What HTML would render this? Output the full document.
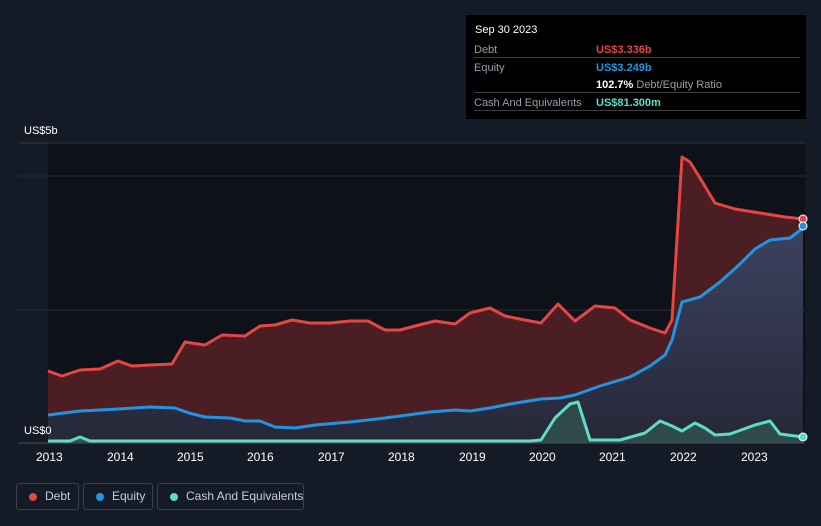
<!DOCTYPE html>
<html><head><style>
body{margin:0;width:821px;height:526px;background:#151b26;font-family:"Liberation Sans",sans-serif;overflow:hidden;position:relative}
.t{position:absolute;font-size:12px;color:#fff}
.tip{position:absolute;left:466px;top:15px;width:340px;height:104px;background:#000;font-size:11px}
.row{position:absolute;left:8px;right:6px;border-bottom:1px solid #3a3d44;height:17px}
.row span{position:absolute;top:4px}
.lg{position:absolute;top:483px;height:27px;border:1px solid #3a3f4a;border-radius:3px;color:#c8ccd3;font-size:12px;line-height:25px;box-sizing:border-box;white-space:nowrap}
.lg i{position:absolute;left:12px;top:9px;width:8px;height:8px;border-radius:50%}
</style></head><body>
<svg width="821" height="526" style="position:absolute;left:0;top:0">
<defs><linearGradient id="eq" x1="0" y1="0" x2="0" y2="1"><stop offset="0" stop-color="#3c4160"/><stop offset="1" stop-color="#262838"/></linearGradient></defs>
<rect x="48" y="143" width="757" height="300" fill="#0e1117"/>
<line x1="18" y1="143" x2="805" y2="143" stroke="#343841"/>
<line x1="18" y1="176" x2="805" y2="176" stroke="#262a31"/>
<line x1="18" y1="310" x2="805" y2="310" stroke="#2a2e38"/>
<path fill="#4a1e23" d="M48,371 L62,376 L80,370 L100,369 L118,361 L132,366 L150,365 L172,364 L185,342 L205,345 L222,335 L245,336 L260,326 L275,325 L292,320 L310,323 L330,323 L350,321 L368,321 L385,330 L400,330 L415,326 L435,321 L455,324 L470,313 L490,308 L505,316 L525,320 L541,323 L558,304 L575,321 L595,306 L615,308 L630,320 L650,328 L665,333 L672,320 L682,157 L690,162 L700,178 L715,203 L735,209 L760,213 L785,217 L803,219 L803,443 L48,443Z"/>
<path fill="url(#eq)" d="M48,415 L80,411 L119,409 L150,407 L175,408 L189,413 L205,417 L230,418 L245,421 L260,421 L275,427 L295,428 L315,425 L350,422 L385,418 L400,416 L430,412 L455,410 L470,411 L490,408 L510,404 L541,399 L560,398 L575,395 L600,386 L630,377 L650,366 L665,355 L672,340 L682,302 L700,297 L720,282 L740,264 L755,249 L770,240 L790,238 L803,228 L803,443 L48,443Z"/>
<path fill="#2e4a4a" d="M48,441 L70,441 L80,437 L90,441 L530,441 L541,440 L555,418 L570,404 L578,402 L590,440 L620,440 L645,433 L660,421 L672,426 L682,431 L695,423 L705,428 L715,435 L730,434 L755,425 L770,421 L780,434 L803,437 L803,443 L48,443Z"/>
<polyline fill="none" stroke="#e64545" stroke-width="3" stroke-linejoin="round" points="48,371 62,376 80,370 100,369 118,361 132,366 150,365 172,364 185,342 205,345 222,335 245,336 260,326 275,325 292,320 310,323 330,323 350,321 368,321 385,330 400,330 415,326 435,321 455,324 470,313 490,308 505,316 525,320 541,323 558,304 575,321 595,306 615,308 630,320 650,328 665,333 672,320 682,157 690,162 700,178 715,203 735,209 760,213 785,217 803,219"/>
<polyline fill="none" stroke="#2394e0" stroke-width="3" stroke-linejoin="round" points="48,415 80,411 119,409 150,407 175,408 189,413 205,417 230,418 245,421 260,421 275,427 295,428 315,425 350,422 385,418 400,416 430,412 455,410 470,411 490,408 510,404 541,399 560,398 575,395 600,386 630,377 650,366 665,355 672,340 682,302 700,297 720,282 740,264 755,249 770,240 790,238 803,228"/>
<polyline fill="none" stroke="#5fdcc6" stroke-width="3" stroke-linejoin="round" points="48,441 70,441 80,437 90,441 530,441 541,440 555,418 570,404 578,402 590,440 620,440 645,433 660,421 672,426 682,431 695,423 705,428 715,435 730,434 755,425 770,421 780,434 803,437"/>
<line x1="18" y1="443" x2="805" y2="443" stroke="#4a4e57"/>
<circle cx="803" cy="219" r="4" fill="#e64545" stroke="#fff" stroke-width="1"/>
<circle cx="803" cy="226" r="4" fill="#2394e0" stroke="#fff" stroke-width="1"/>
<circle cx="803" cy="437" r="4" fill="#5fdcc6" stroke="#fff" stroke-width="1"/>
</svg>
<div class="t" style="left:24px;top:125px;font-size:11px">US$5b</div>
<div class="t" style="left:24px;top:425px;font-size:11px">US$0</div>
<div class="t" style="left:36px;top:450px">2013</div>
<div class="t" style="left:107px;top:450px">2014</div>
<div class="t" style="left:177px;top:450px">2015</div>
<div class="t" style="left:247px;top:450px">2016</div>
<div class="t" style="left:318px;top:450px">2017</div>
<div class="t" style="left:388px;top:450px">2018</div>
<div class="t" style="left:459px;top:450px">2019</div>
<div class="t" style="left:529px;top:450px">2020</div>
<div class="t" style="left:599px;top:450px">2021</div>
<div class="t" style="left:670px;top:450px">2022</div>
<div class="t" style="left:741px;top:450px">2023</div>
<div class="tip">
<div style="position:absolute;left:9px;top:9px;color:#fff;font-size:11px">Sep 30 2023</div>
<div class="row" style="top:25px"><span style="left:0;color:#9a9ea6">Debt</span><span style="left:122px;color:#e64545;font-weight:bold">US$3.336b</span></div>
<div class="row" style="top:43px;border:none"><span style="left:0;color:#9a9ea6">Equity</span><span style="left:122px;color:#2394e0;font-weight:bold">US$3.249b</span></div>
<div class="row" style="top:60px"><span style="left:122px;color:#fff"><b>102.7%</b> <span style="position:static;color:#9a9ea6">Debt/Equity Ratio</span></span></div>
<div class="row" style="top:78px"><span style="left:0;color:#9a9ea6">Cash And Equivalents</span><span style="left:122px;color:#5fdcc6;font-weight:bold">US$81.300m</span></div>
</div>
<div class="lg" style="left:16px;width:63px;padding-left:28px"><i style="background:#e64545"></i>Debt</div>
<div class="lg" style="left:83px;width:70px;padding-left:28px"><i style="background:#2394e0"></i>Equity</div>
<div class="lg" style="left:157px;width:147px;padding-left:28px"><i style="background:#5fdcc6"></i>Cash And Equivalents</div>
</body></html>
